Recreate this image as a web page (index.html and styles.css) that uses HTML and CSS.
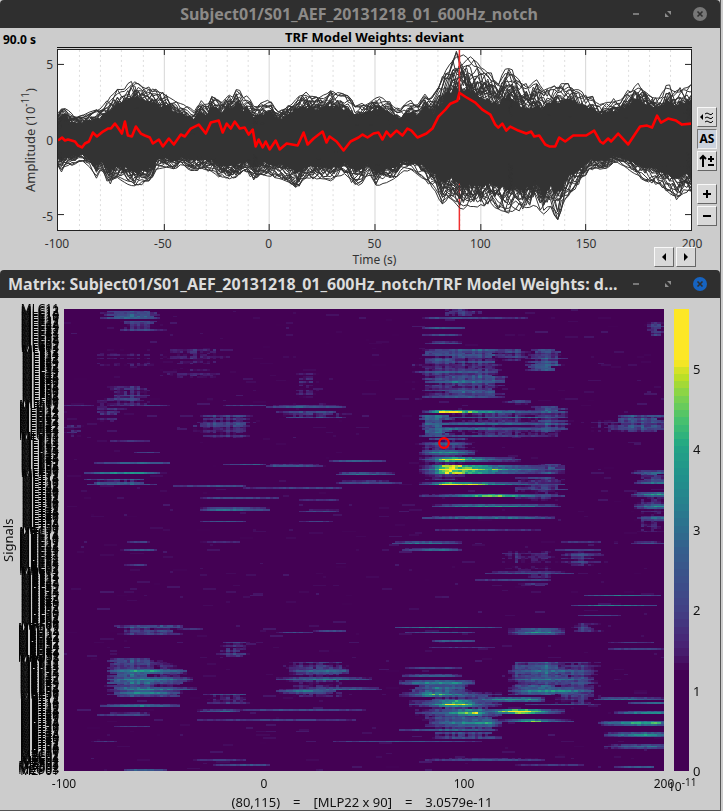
FILE: index.html
```html
<!DOCTYPE html>
<html lang="en">
<head>
<meta charset="utf-8">
<title>TRF Model Weights</title>
<link rel="stylesheet" href="styles.css">
</head>
<body>
<section class="window window-series">
  <header class="titlebar inactive">
    <h1 class="title centered">Subject01/S01_AEF_20131218_01_600Hz_notch</h1>
    <div class="controls">
      <button class="ctl" aria-label="Minimize"><svg viewBox="0 0 16 16"><path d="M5 8h6" stroke="currentColor" stroke-width="1.6"/></svg></button>
      <button class="ctl" aria-label="Maximize"><svg viewBox="0 0 16 16"><path d="M7 5h4v4zM5 7v4h4z" fill="currentColor"/></svg></button>
      <button class="ctl" aria-label="Close"><svg viewBox="0 0 16 16"><circle class="disc" cx="8" cy="8" r="7"/><path d="M5.5 5.5l5 5M10.5 5.5l-5 5" stroke="#2f2f2f" stroke-width="1.6"/></svg></button>
    </div>
  </header>
  <div class="series-body">
    <output class="cursor-time">90.0 s</output>
    <div class="eventbar"><h2 class="plot-title">TRF Model Weights: deviant</h2></div>
    <div class="yaxis">
      <span class="ylabel">Amplitude (10<sup>-11</sup>)</span>
      <div class="yticks"><span>5</span><span>0</span><span>-5</span></div>
    </div>
    <svg class="series" id="series" viewBox="0 0 634 181" preserveAspectRatio="none" role="img" aria-label="Amplitude over time"></svg>
    <div class="tools">
      <button class="btn" aria-label="Display mode"><svg viewBox="0 0 16 16"><path d="M4 5v6L1 8z"/><path d="M6 5q2-2 4 0t4-1M6 9q2-2 4 0t4-1M6 13q2-2 4 0t4-1" fill="none" stroke="#000"/></svg></button>
      <button class="btn pressed">AS</button>
      <button class="btn" aria-label="Flip polarity"><svg viewBox="0 0 16 16"><path d="M4 14V3M1 6l3-3 3 3" fill="none" stroke="#000" stroke-width="2"/><path d="M9 6h6M12 3v6M9 12h6" fill="none" stroke="#000" stroke-width="2"/></svg></button>
      <button class="btn zoom-in" aria-label="Increase gain"><svg viewBox="0 0 16 16"><path d="M4 8h8M8 4v8" stroke="#000" stroke-width="2"/></svg></button>
      <button class="btn" aria-label="Decrease gain"><svg viewBox="0 0 16 16"><path d="M4 8h8" stroke="#000" stroke-width="2"/></svg></button>
    </div>
    <div class="xaxis">
      <div class="xticks"><span>-100</span><span>-50</span><span>0</span><span>50</span><span>100</span><span>150</span><span>200</span></div>
      <div class="xlabel">Time (s)</div>
    </div>
    <div class="nav">
      <button class="btn" aria-label="Previous"><svg viewBox="0 0 16 16"><path d="M10 4v8L6 8z"/></svg></button>
      <button class="btn" aria-label="Next"><svg viewBox="0 0 16 16"><path d="M6 4v8l4-4z"/></svg></button>
    </div>
  </div>
</section>
<section class="window window-matrix">
  <header class="titlebar">
    <h1 class="title">Matrix: Subject01/S01_AEF_20131218_01_600Hz_notch/TRF Model Weights: d...</h1>
    <div class="controls">
      <button class="ctl" aria-label="Minimize"><svg viewBox="0 0 16 16"><path d="M5 8h6" stroke="currentColor" stroke-width="1.6"/></svg></button>
      <button class="ctl" aria-label="Maximize"><svg viewBox="0 0 16 16"><path d="M7 5h4v4zM5 7v4h4z" fill="currentColor"/></svg></button>
      <button class="ctl" aria-label="Close"><svg viewBox="0 0 16 16"><circle class="disc" cx="8" cy="8" r="7"/><path d="M5.5 5.5l5 5M10.5 5.5l-5 5" stroke="#2f2f2f" stroke-width="1.6"/></svg></button>
    </div>
  </header>
  <div class="matrix-body">
    <div class="signals">Signals</div>
    <div class="channels" id="channels"></div>
    <div class="heat">
      <canvas id="heat" width="181" height="275" aria-label="Signal weights by time"></canvas>
      <svg class="marker" viewBox="0 0 12 12"><circle cx="6" cy="6" r="4.8" fill="none" stroke="#f00" stroke-width="2.2"/></svg>
    </div>
    <div class="colorbar"><canvas id="colorbar" width="1" height="64" aria-label="Color scale"></canvas></div>
    <div class="cticks"><span>5</span><span>4</span><span>3</span><span>2</span><span>1</span><span>0</span></div>
    <div class="mticks"><span>-100</span><span>0</span><span>100</span><span>200</span></div>
    <div class="exponent">10<sup>-11</sup></div>
    <output class="status"><span>(80,115)</span><span>=</span><span>[MLP22 x 90]</span><span>=</span><span>3.0579e-11</span></output>
  </div>
</section>
<script src="script.js"></script>
</body>
</html>
```
FILE: styles.css
```css
* { box-sizing: border-box; }
body {
  margin: 0;
  height: 100vh;
  min-height: 600px;
  display: flex;
  flex-direction: column;
  background: #cccccc;
  color: #111;
  font: 12px/16px "Noto Sans", "Open Sans", sans-serif;
}
.window { margin-right: 2px; border-right: 1px solid #555; }
.titlebar {
  display: flex;
  align-items: center;
  height: 28px;
  padding: 0 12px 0 8px;
  background: #2f2f2f;
  color: #dcdcdc;
  border-radius: 4px 4px 0 0;
}
.title {
  flex: 1;
  min-width: 0;
  margin: 0;
  font-size: 16px;
  line-height: 28px;
  font-weight: 700;
  white-space: nowrap;
  overflow: hidden;
}
.centered { text-align: center; padding-left: 82px; }
.inactive { color: #8c8a88; }
.controls { display: flex; gap: 16px; }
.ctl {
  width: 16px;
  height: 16px;
  padding: 0;
  border: 0;
  background: none;
  color: #8c8c8c;
}
.ctl svg, .btn svg { display: block; width: 16px; height: 16px; }
.disc { fill: #1663c0; }
.inactive .disc { fill: #777; }

.series-body {
  display: grid;
  grid-template-columns: 57px minmax(0, 1fr) 28px;
  grid-template-rows: 21px 182px 38px;
}
.cursor-time { padding: 4px 0 0 3px; font-weight: 700; color: #000; }
.eventbar { border-bottom: 1px solid #111; margin-bottom: 1px; }
.plot-title {
  margin: 0;
  font-size: 13px;
  line-height: 19px;
  text-align: center;
  color: #000;
}
.yaxis {
  grid-column: 1;
  grid-row: 2;
  display: flex;
  justify-content: space-between;
  padding-right: 4px;
  color: #333;
}
.ylabel {
  writing-mode: vertical-rl;
  transform: rotate(180deg);
  text-align: center;
  margin-left: 22px;
  font-size: 13px;
}
sup { font-size: 10px; line-height: 0; }
.yticks {
  display: flex;
  flex-direction: column;
  justify-content: space-between;
  padding: 8px 0 6px;
  text-align: right;
}
.series {
  grid-column: 2;
  grid-row: 2;
  display: block;
  width: 100%;
  height: 100%;
  background: #fff;
  border: 1px solid #222;
}
.tools {
  grid-column: 3;
  grid-row: 2;
  display: flex;
  flex-direction: column;
  gap: 2px;
  padding: 58px 0 0 5px;
}
.btn {
  width: 20px;
  height: 20px;
  padding: 0;
  display: grid;
  place-items: center;
  background: #d8d8d8;
  border: 1px solid;
  border-color: #f8f8f8 #666 #666 #f8f8f8;
  font: 700 12px/16px "Noto Sans", sans-serif;
  color: #000;
}
.pressed { background: #ccd3de; border-color: #777 #f0f0f0 #f0f0f0 #777; }
.zoom-in { margin-top: 11px; }
.xaxis { grid-column: 2; grid-row: 3; padding-top: 5px; color: #333; }
.xticks, .mticks { display: flex; justify-content: space-between; margin: 0 -20px; }
.xticks span, .mticks span { width: 40px; text-align: center; }
.xlabel { text-align: center; }
.nav {
  grid-column: 2 / 4;
  grid-row: 3;
  align-self: end;
  justify-self: end;
  display: flex;
  gap: 2px;
  margin: 0 24px 2px 0;
}

.window-series { padding-bottom: 1px; }
.window-matrix {
  flex: 1;
  min-height: 0;
  display: flex;
  flex-direction: column;
  border-bottom: 1px solid #555;
}
.matrix-body {
  flex: 1;
  min-height: 0;
  display: grid;
  grid-template-columns: 18px 46px minmax(0, 1fr) 25px 31px;
  grid-template-rows: minmax(0, 1fr) 39px;
  padding-top: 11px;
}
.signals {
  writing-mode: vertical-rl;
  transform: rotate(180deg);
  text-align: center;
  line-height: 16px;
  font-size: 13px;
}
.channels {
  display: flex;
  flex-direction: column;
  min-height: 0;
  padding-right: 5px;
  line-height: 0;
  text-align: right;
  color: #000;
  opacity: 0.99;
}
.channels span { flex: 1 1 0; min-height: 0; }
.heat { position: relative; contain: size; }
.heat canvas, .colorbar canvas { display: block; width: 100%; height: 100%; image-rendering: pixelated; }
.marker { position: absolute; left: 62.3%; top: 27.7%; width: 12px; height: 12px; }
.colorbar { contain: size; margin-left: 10px; }
.cticks {
  display: flex;
  flex-direction: column;
  justify-content: space-between;
  padding: 52px 0 0 4px;
  margin-bottom: -8px;
  font-size: 13px;
}
.mticks { grid-column: 3; grid-row: 2; align-self: start; padding-top: 5px; }
.exponent { grid-column: 4 / 6; grid-row: 2; padding: 8px 0 0 4px; }
.status {
  grid-column: 1 / 6;
  grid-row: 2;
  align-self: end;
  display: flex;
  justify-content: center;
  gap: 13px;
  padding-left: 4px;
  font-size: 13px;
}
```
FILE: script.js
```js
// Small deterministic generator so every load draws the same traces.
let seed = 20131218;
function rnd() {
  seed = (seed * 1664525 + 1013904223) >>> 0;
  return seed / 4294967296;
}

function interp(points, x) {
  for (let i = 1; i < points.length; i++) {
    if (x <= points[i][0]) {
      const [x0, y0] = points[i - 1], [x1, y1] = points[i];
      return y0 + (y1 - y0) * (x - x0) / (x1 - x0);
    }
  }
  return points[points.length - 1][1];
}
const pairs = text => text.trim().split(/\s+/).map(p => p.split(",").map(Number));

// Signal extents and the selected signal, in plot units.
const upper = pairs(`0,63 3,58 8,59 13,65 23,67 33,63 43,60 51,50 61,40 70,36 78,31 83,36 93,40 108,44 118,52
128,55 136,63 143,52 150,57 155,44 163,52 171,44 176,47 180,35 184,50 190,47 196,58 205,54 213,51 220,62 228,57
235,52 239,47 248,44 258,47 268,47 273,43 283,45 291,48 298,56 305,55 323,46 333,54 343,60 353,51 361,56 367,46
375,48 381,38 389,18 398,4 405,3 413,10 423,18 433,25 441,30 448,22 454,21 461,32 473,38 479,31 486,42 493,40
501,36 513,36 523,43 533,46 543,55 555,50 563,50 573,40 580,35 588,40 595,45 603,46 610,35 618,42 627,38 634,35`);
const lower = pairs(`0,117 3,122 8,115 15,115 23,110 31,118 39,128 43,118 51,136 61,128 71,134 79,138 85,135 93,132
98,120 108,118 118,120 123,115 133,120 143,120 156,122 163,128 171,130 180,128 188,120 197,132 205,124 213,126
223,128 233,132 240,138 248,130 263,130 273,130 288,125 298,136 305,132 311,124 318,138 328,134 338,130 345,120
358,122 368,130 378,140 384,153 393,146 403,157 413,158 423,159 433,154 443,158 451,163 458,157 466,161 473,158
480,158 486,170 493,158 501,168 508,150 518,138 528,128 533,119 548,121 558,113 568,118 578,125 588,130 598,133
608,140 615,143 621,150 628,140 634,143`);
const selected = pairs(`0,91 4,88 7,91 10,90 17,92 20,96 24,98 27,94 31,92 35,83 39,87 45,82 50,79 53,79 57,74 60,78
64,84 67,72 70,86 74,87 78,77 83,84 87,86 92,88 95,94 101,90 105,97 111,89 116,95 123,85 127,87 133,79 141,75
148,84 153,73 161,71 165,83 169,74 173,79 177,72 182,79 187,78 191,85 195,80 198,97 201,90 205,98 208,92 212,100
218,91 222,100 229,94 240,96 246,83 250,95 256,89 265,82 269,93 272,87 279,92 286,101 293,92 301,88 305,85 310,88
316,84 321,83 325,90 329,82 333,87 339,81 345,86 350,79 354,81 360,88 369,84 375,79 381,67 388,60 393,54 400,51
402,43 408,47 418,53 425,60 433,65 438,75 441,78 445,74 449,81 453,77 461,81 469,84 474,82 477,87 482,86 488,95
492,97 498,97 502,88 508,92 516,86 529,86 537,81 543,92 546,94 551,89 554,92 561,84 571,95 577,86 583,77 590,76
595,78 600,66 604,73 611,69 619,71 625,75 634,74`);

function drawSeries() {
  const W = 634, H = 181, mid = 90, step = 3.5;
  let out = "";
  for (let i = 1; i < 30; i++) {
    const x = Math.round(i * W / 30) + 0.5;
    out += i % 5
      ? `<path d="M${x} 0V${H}" stroke="#ddd" stroke-dasharray="2 3"/>`
      : `<path d="M${x} 0V${H}" stroke="#d6d6d6"/>`;
  }
  out += `<path d="M402 0V${H}" stroke="#f03030" stroke-width="1.5"/>`;
  let top = [], bottom = [];
  for (let x = 0; x <= W + 3; x += 2) {
    const core = x > 375 && x < 485 ? 0.56 : 0.68;
    top.push(`${x} ${(mid + (interp(upper, x) - mid) * (core + rnd() * 0.1)).toFixed(1)}`);
    bottom.unshift(`${x} ${(mid + (interp(lower, x) - mid) * (0.66 + rnd() * 0.1)).toFixed(1)}`);
  }
  out += `<path fill="#333" d="M${top.concat(bottom).join("L")}Z"/>`;
  let lines = "";
  for (let k = 0; k < 56; k++) {
    const edge = k % 2 ? upper : lower;
    const base = 0.5 + rnd() * 0.34;
    let v = 0;
    for (let x = 0, n = 0; x <= W + step; x += step, n++) {
      v = v * 0.76 + (rnd() - 0.5) * 0.32;
      const f = k < 2 ? 1 - Math.abs(v) * 0.25 : Math.min(1.04, base + v);
      const y = mid + (interp(edge, x) - mid) * f;
      lines += (n ? "L" : "M") + x.toFixed(1) + " " + y.toFixed(1);
    }
  }
  out += `<path d="${lines}" fill="none" stroke="#333" stroke-linejoin="round"/>`;
  out += `<path d="M402 4V50" stroke="#f03030" stroke-width="1.5" stroke-dasharray="14 3 5 2"/>`;
  out += `<polyline points="${selected.join(" ")}" fill="none" stroke="#f00" stroke-width="2.6" stroke-linejoin="round"/>`;
  for (let i = 1; i < 6; i++) {
    const x = Math.round(i * W / 6) + 0.5;
    out += `<path d="M${x} 0v5M${x} ${H}v-6" stroke="#222"/>`;
  }
  out += `<path d="M0 14.5h6M0 165.5h6M634 14.5h-6M634 165.5h-6" stroke="#222"/>`;
  document.getElementById("series").innerHTML = out;
}

// Signal names, in acquisition order.
function drawChannels() {
  const side = {
    C: ["1:7", "2:5", "3:2", "4:2", "5:5", "6:3"],
    F: ["1:4", "2:5", "3:5", "4:6", "5:6", "6:7"],
    O: ["1:4", "2:4", "3:4", "4:4", "5:3"],
    P: ["1:2", "2:3", "3:5", "4:5", "5:7"],
    T: ["1:6", "2:7", "3:7", "4:7", "5:7"]
  };
  const names = [];
  for (const h of ["ML", "MR"])
    for (const area in side)
      for (const row of side[area]) {
        const [r, n] = row.split(":");
        for (let i = 1; i <= +n; i++) names.push(h + area + r + i);
      }
  names.push("MZC01", "MZC02", "MZC03", "MZC04", "MZF01", "MZF02", "MZF03", "MZO01", "MZO02", "MZO03", "MZP01");
  const box = document.getElementById("channels");
  for (const name of names) {
    const s = document.createElement("span");
    s.textContent = name;
    box.append(s);
  }
}

const viridis = ["440154", "482475", "414487", "355f8d", "2a788e", "21918c", "22a884", "44bf70", "7ad151", "bddf26", "fde725"]
  .map(h => [0, 2, 4].map(i => parseInt(h.slice(i, i + 2), 16)));
const scale = pairs("0,0 1.3,0 1.5,0.7 2,1.8 2.8,3 3.4,4.4 4,5.6 4.3,6.7 4.8,8.4 5,9.2 5.15,10 9,10");
function color(v) {
  const t = interp(scale, v), i = Math.min(9, Math.floor(t)), f = t - i;
  return viridis[i].map((c, j) => Math.round(c + (viridis[i + 1][j] - c) * f));
}

// Streaks: x0, x1, y, height, peak value, peak x.
const streaks = pairs(`36,93,10,2,3,66 0,27,97,1,2,10 73,103,97,1,2.3,88 159,199,97,2,2.3,180 202,280,98,3,2.8,235
46,83,132,1,1.9,65 70,93,144,1,2.2,80 30,105,153,2,3,78 21,96,164,2,3.8,66 110,180,178,2,2.5,165 180,276,179,2,2.2,255
136,215,189,2,2.4,160 236,275,190,2,1.9,255 136,205,200,3,3.3,158 236,275,201,3,2.4,256 136,180,212,2,2.7,158 236,268,212,2,2.1,250
160,200,155,2,2.8,190 202,258,157,3,2.8,215 265,320,152,2,2.7,284 272,330,164,3,3.4,290 272,336,173,3,2.5,300
358,463,10,2,2.3,375 358,400,19,2,3,378 358,396,26,2,2.5,378 361,396,33,3,2.6,380
350,434,63,2,2.9,390 360,430,72,4,3.3,395 358,430,80,3,2.7,395 358,430,87,3,2.7,395
358,495,102,3,5.5,375 358,500,108,2,3,470 358,500,114,3,3,420 358,500,120,3,3.1,378 358,475,126,2,2.5,400
356,405,134,3,2.8,378 356,410,143,5,4,379 356,455,150,5,5.8,382 356,498,161,8,7,381 356,498,174,4,5.9,380
356,500,186,4,4.9,425 368,495,197,4,3.8,428 358,490,209,4,3.2,425 370,475,221,2,2,415 336,395,233,3,2.8,375 496,536,233,2,2,515
568,600,163,3,2.9,592 570,600,173,4,3.3,594 568,600,185,5,4,595 570,600,198,5,3.8,595 575,600,209,5,3.2,595
58,91,241,2,2.6,78 63,83,233,1,2.3,74 137,173,233,1,1.8,160 60,82,257,2,2,75
116,136,320,1,2,124 213,248,323,2,2.4,228 250,280,321,1,2.3,266
44,120,362,5,4,74 44,126,370,5,4,76 50,130,379,3,3.6,76 50,116,384,5,3.6,74
224,285,362,5,3.4,263 212,305,370,4,3.4,262 230,318,379,4,3,274 213,270,383,5,3.2,240
38,115,396,4,3.5,68 34,85,405,3,2.5,70 50,85,417,2,2.1,68 133,175,402,4,3,160 175,300,401,2,2.4,220
133,290,411,2,2.1,210 27,53,432,1,1.9,40 267,415,432,2,2.6,340 150,205,456,2,2.5,188 130,180,451,2,2.1,160 60,100,461,2,3,76
328,395,233,3,3.4,358 338,395,241,3,3,378 568,600,233,3,2.6,582 490,535,241,2,2.4,510
420,510,264,3,2.6,460 410,485,271,2,2.3,465 520,595,286,2,3.3,552 507,593,296,2,3.6,545 515,556,306,2,2.5,530
330,435,318,2,3.6,375 340,410,324,2,2.6,378 368,410,331,1,2.9,385 365,430,338,1,2,390 445,498,322,6,3.8,475
545,590,333,1,2.1,575 545,598,340,2,2.3,576 340,395,358,1,2.3,370 338,395,366,4,3,372 335,410,373,5,3.8,378
335,435,386,5,4.6,365 345,435,394,6,5.8,390 400,480,391,5,4,460 350,432,404,7,5.1,410 400,500,402,5,6.5,458
365,435,414,8,4,420 430,510,412,4,4.8,466 335,430,421,2,3,400 445,530,362,4,3.2,470 445,530,370,5,3.4,475
445,530,381,6,4,475 460,532,396,2,2.5,500 530,600,389,3,3.3,550 565,600,394,2,3.3,592 550,600,404,4,3.8,594
535,600,414,5,4.4,588 540,600,426,5,3.9,588 540,600,437,5,3.1,590 360,480,451,3,2.4,420 550,590,458,2,2.8,578 450,520,456,1,2,490`);

// Patches: x0, x1, y0, y1, value.
const patches = pairs(`44,92,3,9,2.7 58,92,13,21,2.4 96,163,40,70,1.6 30,95,41,56,1.4 45,85,78,96,2.3 215,280,103,108,2.1
133,185,106,128,2 32,60,92,112,1.7 0,18,116,127,1.7 26,86,170,176,2.4 230,252,64,88,1.6 381,414,0,6,2.5
581,600,14,26,2.1 358,392,41,89,2.2 380,434,41,89,2.5 464,496,41,61,2.6 434,464,41,52,2.1 356,384,106,127,2.9
466,498,98,122,2.5 550,600,106,122,2.3 520,560,112,122,1.5 358,405,130,138,2 476,498,155,163,2.5 450,497,168,190,2.1
575,600,166,172,2.4 570,600,188,222,1.8 441,471,91,95,2.2 54,113,316,325,2.5 64,84,316,325,2 153,183,333,347,1.8
46,90,351,387,2.8 80,120,356,387,2.1 223,283,353,387,1.9 143,183,386,394,2.1 438,490,243,260,1.7 498,536,241,256,1.9
455,485,262,278,1.8 510,535,315,322,1.9 350,398,376,388,2.8 365,432,408,420,2.4 370,430,425,430,2.1 451,498,354,386,2.6
490,532,354,396,2.1 356,400,136,170,2 345,365,55,90,1.4 384,500,105,127,1.7 365,430,388,408,2.2`);

function drawHeat() {
  const cols = 181, rows = 275, px = cols / 600, py = rows / 462;
  const grid = new Float32Array(cols * rows);
  const put = (c, r, v) => {
    if (c < 0 || r < 0 || c >= cols || r >= rows) return;
    grid[r * cols + c] = Math.max(grid[r * cols + c], v);
  };
  const wave = Array.from({ length: cols }, () => 0.86 + rnd() * 0.28);
  for (let k = 0; k < 900; k++) {
    const c = Math.floor(rnd() * cols), r = Math.floor(rnd() * rows), n = 1 + Math.floor(rnd() * 4), v = 1.2 + rnd() * 0.3;
    for (let i = 0; i < n; i++) put(c + i, r, v);
  }
  for (const [x0, x1, y0, y1, v] of patches) {
    for (let r = Math.floor(y0 * py); r <= y1 * py; r++) {
      const row = 0.6 + rnd() * 0.48, left = rnd() * 14 - 7, right = rnd() * 20 - 10;
      for (let c = Math.round((x0 + left) * px); c < (x1 + right) * px; c++) {
        const u = (c / px - x0) / (x1 - x0) * 2 - 1;
        put(c, r, v * row * wave[Math.min(cols - 1, Math.max(0, c))] * (1.05 - 0.25 * u * u) * (0.85 + rnd() * 0.3));
      }
    }
  }
  for (const [x0, x1, y, h, peak, xp] of streaks) {
    const n = Math.max(1, Math.round(h * py)), r0 = Math.round(y * py - n / 2);
    for (let c = Math.round(x0 * px); c < x1 * px; c++) {
      const x = c / px, half = x < xp ? xp - x0 : x1 - xp, d = Math.abs(x - xp) / (half || 1);
      const soft = 1.5 + (peak - 1.5) * (peak > 4.5 ? Math.exp(-d * d * 5) * 0.5 + 0.5 * (1 - d * 0.75) : 1 - d * d * 0.75);
      for (let i = 0; i < n; i++) {
        const fall = n > 1 && i !== Math.floor(n / 2) ? 0.72 : 1;
        put(c, r0 + i, soft * fall * (0.84 + rnd() * 0.24));
      }
    }
  }
  const ctx = document.getElementById("heat").getContext("2d");
  const img = ctx.createImageData(cols, rows);
  grid.forEach((v, i) => img.data.set([...color(v), 255], i * 4));
  ctx.putImageData(img, 0, 0);

  const bar = document.getElementById("colorbar").getContext("2d");
  for (let i = 0; i < 64; i++) {
    bar.fillStyle = `rgb(${color(5.75 * (1 - i / 64))})`;
    bar.fillRect(0, i, 1, 1);
  }
}

drawSeries();
drawChannels();
drawHeat();
```
